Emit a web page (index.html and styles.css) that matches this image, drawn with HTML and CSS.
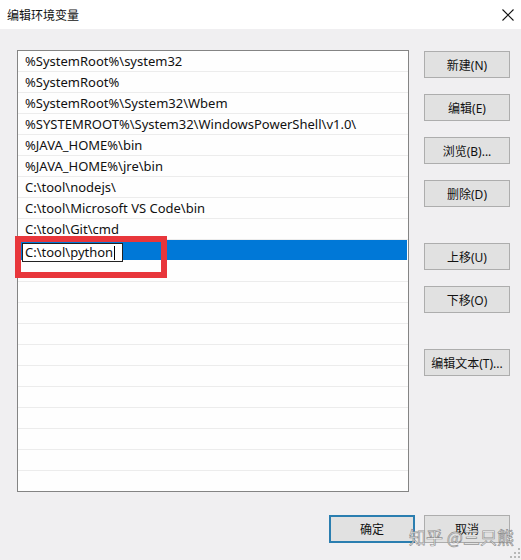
FILE: index.html
```html
<!DOCTYPE html>
<html lang="zh-CN">
<head>
<meta charset="utf-8">
<title>编辑环境变量</title>
<link rel="stylesheet" href="styles.css">
</head>
<body>
<div class="window">
  <div class="titlebar">
    <span class="title">编辑环境变量</span>
    <svg class="close" width="12" height="12" viewBox="0 0 12 12"><path d="M0.5 0.5 L11.5 11.5 M11.5 0.5 L0.5 11.5" stroke="#111" stroke-width="1.1" fill="none"/></svg>
  </div>
  <div class="content">
    <div class="main">
      <div class="list">
        <div class="row">%SystemRoot%\system32</div>
        <div class="row">%SystemRoot%</div>
        <div class="row">%SystemRoot%\System32\Wbem</div>
        <div class="row">%SYSTEMROOT%\System32\WindowsPowerShell\v1.0\</div>
        <div class="row">%JAVA_HOME%\bin</div>
        <div class="row">%JAVA_HOME%\jre\bin</div>
        <div class="row">C:\tool\nodejs\</div>
        <div class="row">C:\tool\Microsoft VS Code\bin</div>
        <div class="row">C:\tool\Git\cmd</div>
        <div class="row selected"></div>
        <div class="row"></div>
        <div class="row"></div>
        <div class="row"></div>
        <div class="row"></div>
        <div class="row"></div>
        <div class="row"></div>
        <div class="row"></div>
        <div class="row"></div>
        <div class="row"></div>
        <div class="row"></div>
        <div class="row"></div>
      </div>
      <div class="side">
        <div class="group">
          <button class="btn">新建(N)</button>
          <button class="btn">编辑(E)</button>
          <button class="btn">浏览(B)...</button>
          <button class="btn">删除(D)</button>
        </div>
        <div class="group">
          <button class="btn">上移(U)</button>
          <button class="btn">下移(O)</button>
        </div>
        <div class="group">
          <button class="btn">编辑文本(T)...</button>
        </div>
      </div>
    </div>
    <div class="footer">
      <button class="btn default">确定</button>
      <button class="btn">取消</button>
    </div>
  </div>
  <div class="editbox"><span>C:\tool\python</span><span class="caret"></span></div>
  <div class="annot"></div>
  <div class="watermark">知乎 @三只熊</div>
  <svg class="grip" width="10" height="10" viewBox="0 0 10 10">
    <rect x="8" y="0" width="2" height="2" fill="#b8b8b8"/>
    <rect x="4" y="4" width="2" height="2" fill="#b8b8b8"/>
    <rect x="8" y="4" width="2" height="2" fill="#b8b8b8"/>
    <rect x="0" y="8" width="2" height="2" fill="#b8b8b8"/>
    <rect x="4" y="8" width="2" height="2" fill="#b8b8b8"/>
    <rect x="8" y="8" width="2" height="2" fill="#b8b8b8"/>
  </svg>
</div>
</body>
</html>
```
FILE: styles.css
```css
* { box-sizing: border-box; }
html, body { margin: 0; padding: 0; }
body {
  font-family: "Noto Sans", "Noto Sans CJK SC", sans-serif;
  background: #f0eff1;
}
.window {
  position: relative;
  width: 521px;
  height: 560px;
  background: #f0eff1;
  overflow: hidden;
}
.titlebar {
  height: 29px;
  background: #ffffff;
  display: flex;
  align-items: center;
  justify-content: space-between;
  padding: 0 7px 0 7px;
}
.title {
  font-family: "Noto Sans CJK SC", sans-serif;
  font-size: 12px;
  color: #111;
  margin-top: -1px;
}
.close { margin-right: 0; margin-top: 0; }
.content {
  padding: 21px 11px 0 17px;
}
.main {
  display: flex;
  gap: 15px;
}
.list {
  width: 392px;
  height: 442px;
  border: 1px solid #848484;
  background: #fefefe;
  overflow: hidden;
}
.row {
  height: 21px;
  border-bottom: 1px solid #ececec;
  padding-left: 7px;
  font-size: 13px;
  line-height: 20px;
  color: #111;
  white-space: nowrap;
  overflow: hidden;
}
.row.selected {
  background: #0078d7;
  border-bottom-color: #fefefe;
  margin-right: 1px;
}
.side {
  display: flex;
  flex-direction: column;
  gap: 36px;
  padding-top: 1px;
}
.group {
  display: flex;
  flex-direction: column;
  gap: 16px;
}
.btn {
  width: 86px;
  height: 27px;
  background: #e1e1e1;
  border: 1px solid #adadad;
  font-family: "Noto Sans", "Noto Sans CJK SC", sans-serif;
  font-size: 12px;
  color: #111;
  padding: 0;
  margin: 0;
}
.btn.default {
  border: 2px solid #2b7eb0;
}
.footer {
  display: flex;
  justify-content: flex-end;
  gap: 9px;
  margin-top: 23px;
  height: 28px;
}
.footer .btn { height: 28px; }
.editbox {
  position: absolute;
  left: 22px;
  top: 243px;
  width: 101px;
  height: 19px;
  background: #fff;
  border: 1px solid #222;
  font-size: 13px;
  line-height: 17px;
  padding-left: 2px;
  color: #111;
  display: flex;
  align-items: center;
}
.caret {
  display: inline-block;
  width: 1px;
  height: 14px;
  background: #000;
  margin-left: 1px;
}
.annot {
  position: absolute;
  left: 15px;
  top: 236px;
  width: 152px;
  height: 42px;
  border: 6px solid #e8363b;
}
.watermark {
  position: absolute;
  left: 409px;
  top: 527px;
  font-family: "Noto Sans CJK SC", sans-serif;
  font-size: 17px;
  line-height: 20px;
  color: rgba(255, 255, 255, 0.9);
  -webkit-text-stroke: 0.7px rgba(110, 110, 110, 0.75);
  white-space: nowrap;
}
.grip {
  position: absolute;
  left: 510px;
  top: 548px;
}
```
